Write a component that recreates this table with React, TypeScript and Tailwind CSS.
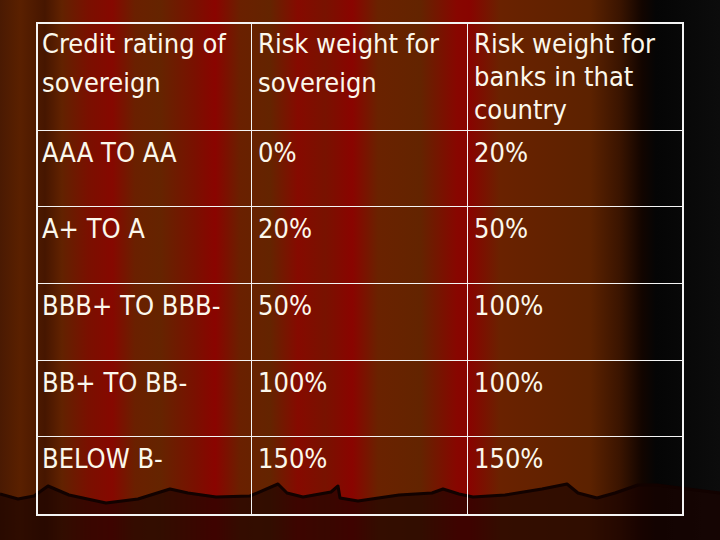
import React from 'react'

type Row = { rating: string; sovereign: string; banks: string }

const rows: Row[] = [
  { rating: 'AAA TO AA', sovereign: '0%', banks: '20%' },
  { rating: 'A+ TO A', sovereign: '20%', banks: '50%' },
  { rating: 'BBB+ TO BBB-', sovereign: '50%', banks: '100%' },
  { rating: 'BB+ TO BB-', sovereign: '100%', banks: '100%' },
  { rating: 'BELOW B-', sovereign: '150%', banks: '150%' },
]

const rowHeights = ['h-[76px]', 'h-[77px]', 'h-[77px]', 'h-[76px]', 'h-[77px]']

// stage floor drawn over the curtain
function Floor() {
  const edge =
    'M0,494 L18,499 L34,496 L48,486 L69,495 L106,503 L138,499 L170,489 L188,493 L216,497 L250,496 L278,484 L287,493 L303,497 L331,492 L338,486 L340,498 L358,501 L399,495 L432,493 L443,489 L459,494 L473,497 L505,495 L542,489 L567,484 L578,493 L597,498 L615,493 L638,485 L657,485 L680,488 L720,493'
  return (
    <svg className="absolute left-0 bottom-0" width="720" height="60" viewBox="0 480 720 60">
      <path d={edge + ' L720,540 L0,540 Z'} fill="#1a0300" fillOpacity="0.68" />
      <path d={edge} fill="none" stroke="#120200" strokeWidth="3" strokeLinejoin="round" />
    </svg>
  )
}

export default function App() {
  return (
    <div className="relative w-[720px] h-[540px] overflow-hidden bg-[linear-gradient(90deg,#4a1a02_0px,#5a2000_20px,#461600_45px,#622200_62px,#7a1000_88px,#860800_112px,#6a2000_135px,#652400_160px,#7a1000_195px,#8a0400_215px,#6a2000_240px,#642400_270px,#860a00_298px,#781200_325px,#8a0400_352px,#6a2200_378px,#632400_420px,#880600_457px,#880400_470px,#6a2200_500px,#5c2200_590px,#3a1400_620px,#120500_642px,#050505_656px,#0c0c0c_720px)]">
      <Floor />
      <div className="relative pt-[22px] pl-[36px] font-['DejaVu_Sans_Condensed','DejaVu_Sans',sans-serif] text-[27px] text-[#fbf8ec]">
        <div className="w-[648px] border-2 border-[#f4f4f4]">
          <div className="grid grid-cols-[214px_216px_214px] h-[107px] border-b border-[#f4f4f4]">
            <div className="pl-[4px] leading-[39px] border-r border-[#f4f4f4]">
              Credit rating of<br />sovereign
            </div>
            <div className="pl-[6px] leading-[39px] border-r border-[#f4f4f4]">
              Risk weight for<br />sovereign
            </div>
            <div className="pl-[6px] pt-[3px] leading-[33px]">
              Risk weight for<br />banks in that<br />country
            </div>
          </div>
          {rows.map((r, i) => (
            <div
              key={r.rating}
              className={`grid grid-cols-[214px_216px_214px] ${rowHeights[i]} ${i < rows.length - 1 ? 'border-b border-[#f4f4f4]' : ''}`}
            >
              <div className="pl-[4px] pt-[2px] leading-[39px] border-r border-[#f4f4f4]">{r.rating}</div>
              <div className="pl-[6px] pt-[2px] leading-[39px] border-r border-[#f4f4f4]">{r.sovereign}</div>
              <div className="pl-[6px] pt-[2px] leading-[39px]">{r.banks}</div>
            </div>
          ))}
        </div>
      </div>
    </div>
  )
}
